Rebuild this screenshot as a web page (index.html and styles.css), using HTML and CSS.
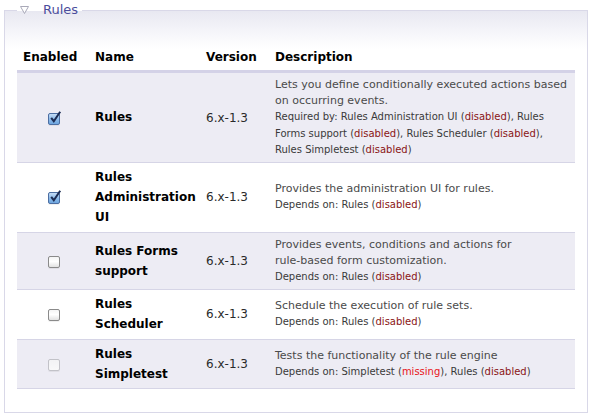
FILE: index.html
```html
<!DOCTYPE html>
<html>
<head>
<meta charset="utf-8">
<link rel="stylesheet" href="styles.css">
</head>
<body>
<fieldset class="group">
  <legend class="group-title">
    <svg class="toggle" width="9" height="8" viewBox="0 0 9 8"><polygon points="0.5,0.5 8.5,0.5 4.5,7.5" fill="#ffffff" stroke="#a9a9b8" stroke-width="1"/></svg>
    <span class="group-label">Rules</span>
  </legend>
  <table class="modules">
    <thead>
      <tr>
        <th class="c-enabled">Enabled</th>
        <th class="c-name">Name</th>
        <th class="c-version">Version</th>
        <th class="c-desc">Description</th>
      </tr>
    </thead>
    <tbody>
      <tr class="odd">
        <td class="c-enabled"><span class="cb checked"><svg class="tick" width="14" height="14" viewBox="0 0 14 14"><path d="M3.2 6.8 L5.8 10.2 L12.2 0.8" fill="none" stroke="#1b2b52" stroke-width="2"/></svg></span></td>
        <td class="c-name">Rules</td>
        <td class="c-version">6.x-1.3</td>
        <td class="c-desc">
          <div class="desc">Lets you define conditionally executed actions based<br>on occurring events.</div>
          <div class="req">Required by: Rules Administration UI (<span class="dis">disabled</span>), Rules<br>Forms support (<span class="dis">disabled</span>), Rules Scheduler (<span class="dis">disabled</span>),<br>Rules Simpletest (<span class="dis">disabled</span>)</div>
        </td>
      </tr>
      <tr class="even">
        <td class="c-enabled"><span class="cb checked"><svg class="tick" width="14" height="14" viewBox="0 0 14 14"><path d="M3.2 6.8 L5.8 10.2 L12.2 0.8" fill="none" stroke="#1b2b52" stroke-width="2"/></svg></span></td>
        <td class="c-name">Rules Administration UI</td>
        <td class="c-version">6.x-1.3</td>
        <td class="c-desc">
          <div class="desc">Provides the administration UI for rules.</div>
          <div class="req">Depends on: Rules (<span class="dis">disabled</span>)</div>
        </td>
      </tr>
      <tr class="odd">
        <td class="c-enabled"><span class="cb"></span></td>
        <td class="c-name">Rules Forms support</td>
        <td class="c-version">6.x-1.3</td>
        <td class="c-desc">
          <div class="desc">Provides events, conditions and actions for<br>rule-based form customization.</div>
          <div class="req">Depends on: Rules (<span class="dis">disabled</span>)</div>
        </td>
      </tr>
      <tr class="even">
        <td class="c-enabled"><span class="cb"></span></td>
        <td class="c-name">Rules Scheduler</td>
        <td class="c-version">6.x-1.3</td>
        <td class="c-desc">
          <div class="desc">Schedule the execution of rule sets.</div>
          <div class="req">Depends on: Rules (<span class="dis">disabled</span>)</div>
        </td>
      </tr>
      <tr class="odd">
        <td class="c-enabled"><span class="cb off"></span></td>
        <td class="c-name">Rules Simpletest</td>
        <td class="c-version">6.x-1.3</td>
        <td class="c-desc">
          <div class="desc">Tests the functionality of the rule engine</div>
          <div class="req">Depends on: Simpletest (<span class="miss">missing</span>), Rules (<span class="dis">disabled</span>)</div>
        </td>
      </tr>
    </tbody>
  </table>
</fieldset>
</body>
</html>
```
FILE: styles.css
```css
html, body {
  margin: 0;
  padding: 0;
  background: #ffffff;
}
body {
  font-family: "DejaVu Sans", Verdana, sans-serif;
  color: #222222;
}
.group {
  margin: 2px 3px 0 4px;
  padding: 0 12px 23px 12px;
  border: 1px solid #d9d8e8;
  background: linear-gradient(to bottom, #e8e8f1 0px, #f6f6fa 22px, #ffffff 38px);
  min-width: 0;
}
.group-title {
  padding: 0 4px 0 3px;
  display: flex;
  align-items: center;
  height: 16px;
  line-height: 16px;
}
.toggle {
  display: block;
  margin-right: 14px;
  margin-top: -1px;
}
.group-label {
  font-size: 13px;
  color: #4b4d9c;
}
.modules {
  width: 100%;
  border-collapse: collapse;
  table-layout: fixed;
  margin-top: 27px;
}
.modules th {
  font-size: 12px;
  font-weight: bold;
  text-align: left;
  color: #000000;
  line-height: 16px;
  padding: 4px 6px 5px 6px;
  border-bottom: 3px solid #d4d2e7;
  white-space: nowrap;
}
.modules td {
  padding: 4px 6px;
  vertical-align: middle;
  border-bottom: 1px solid #d6d5e6;
}
.modules tr.odd td {
  background: #edecf4;
}
.modules tr.even td {
  background: #ffffff;
}
.modules th.c-enabled { width: 60px; }
.modules th.c-name { width: 101px; padding-right: 4px; }
.modules th.c-version { width: 57px; }
.modules td.c-enabled {
  text-align: center;
  padding-left: 6px;
  padding-right: 5px;
}
.modules td.c-name {
  font-size: 12px;
  font-weight: bold;
  line-height: 20.2px;
  color: #000000;
  padding-right: 4px;
}
.modules td.c-version {
  font-size: 12px;
  color: #2a2a2a;
  line-height: 16px;
}
.modules td.c-desc {
  padding-right: 2px;
}
.desc {
  font-size: 11px;
  line-height: 16.2px;
  color: #4a4a4a;
}
.req {
  font-size: 10px;
  line-height: 16.2px;
  color: #3a3a3a;
}
.dis { color: #8a1414; }
.miss { color: #e8141b; }
.cb {
  display: inline-block;
  position: relative;
  width: 10px;
  height: 10px;
  border: 1px solid #8a8a8a;
  border-radius: 2px;
  background: linear-gradient(to bottom, #f4f4f4 0%, #ffffff 45%, #e2e2e2 100%);
  vertical-align: middle;
  box-shadow: 0 1px 0 rgba(0,0,0,0.06);
}
.cb.checked {
  border-color: #4c6ea2;
  background: linear-gradient(to bottom, #c4dcf5 0%, #8fbcea 50%, #6ea6df 100%);
}
.cb.off {
  border-color: #c2c2c8;
  background: linear-gradient(to bottom, #f2f2f4 0%, #f8f8f9 100%);
}
.tick {
  position: absolute;
  left: -1px;
  top: -3px;
}
```
